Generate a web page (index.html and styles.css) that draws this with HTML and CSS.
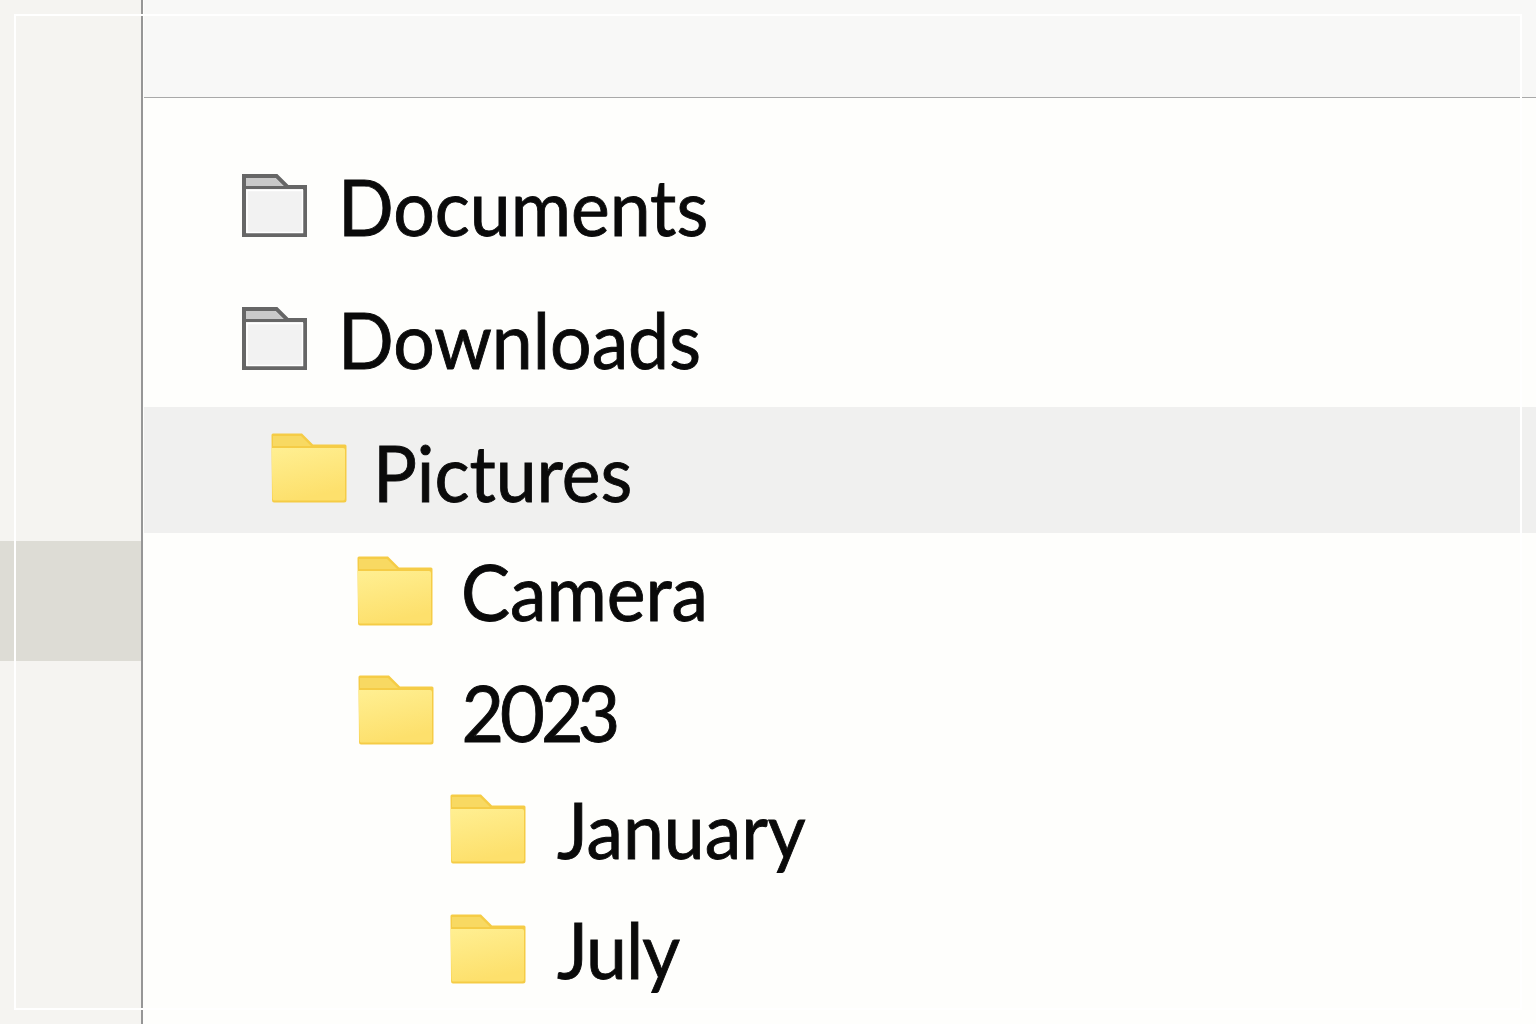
FILE: index.html
```html
<!DOCTYPE html>
<html lang="en">
<head>
    <meta charset="UTF-8">
    <meta name="viewport" content="width=device-width, initial-scale=1.0">
    <title>Folders</title>
    <link rel="stylesheet" href="styles.css">
</head>
<body>
    <svg class="icon-defs" width="0" height="0" aria-hidden="true">
        <defs>
            <linearGradient id="yellow-body" x1="0" y1="0" x2="0.3" y2="1">
                <stop offset="0" stop-color="#ffef92"/>
                <stop offset="1" stop-color="#fde06c"/>
            </linearGradient>
            <symbol id="folder-grey" viewBox="0 0 65 63">
                <path d="M2 2H34.500L45.500 13H63V61H2Z" fill="#f1f1f1" stroke="#666" stroke-width="4"/>
                <path d="M4 4H33.500L41.500 12H4Z" fill="#c9c9c9"/>
                <path d="M3 13.500H62" stroke="#666" stroke-width="3"/>
                <path d="M5 16.500V58.500H60.500V16.500Z" fill="#f2f2f2" stroke="#fff" stroke-width="1.500"/>
            </symbol>
            <symbol id="folder-yellow" viewBox="0 0 76 70">
                <path d="M0.500 2Q0.500 0.500 2 0.500H31L42 11.500H74Q75.500 11.500 75.500 13V67Q75.500 69.500 73 69.500H3Q1 69.500 1 67Z" fill="#f5cc46"/>
                <path d="M2 3H30L40 13H2Z" fill="#f8d962"/>
                <path d="M0.500 15H72Q74 15 74 17V65Q74 67.500 72 67.500H3Q1.500 67.500 1.500 65Z" fill="url(#yellow-body)"/>
            </symbol>
        </defs>
    </svg>

    <div class="window">
        <aside class="sidebar">
            <div class="sidebar-item"></div>
        </aside>
        <main class="content">
            <header class="toolbar"></header>
            <ul class="tree">
                <li class="row row-documents">
                    <svg class="icon icon-grey"><use href="#folder-grey"/></svg>
                    <span>Documents</span>
                </li>
                <li class="row row-downloads">
                    <svg class="icon icon-grey"><use href="#folder-grey"/></svg>
                    <span>Downloads</span>
                </li>
                <li class="row row-pictures selected">
                    <svg class="icon icon-yellow"><use href="#folder-yellow"/></svg>
                    <span>Pictures</span>
                </li>
                <li class="row row-camera">
                    <svg class="icon icon-yellow"><use href="#folder-yellow"/></svg>
                    <span>Camera</span>
                </li>
                <li class="row row-2023">
                    <svg class="icon icon-yellow"><use href="#folder-yellow"/></svg>
                    <span>2023</span>
                </li>
                <li class="row row-january">
                    <svg class="icon icon-yellow"><use href="#folder-yellow"/></svg>
                    <span>January</span>
                </li>
                <li class="row row-july">
                    <svg class="icon icon-yellow"><use href="#folder-yellow"/></svg>
                    <span>July</span>
                </li>
            </ul>
        </main>
    </div>

    <div class="frame"></div>
</body>
</html>
```

FILE: styles.css
```css
* {
    margin: 0;
    padding: 0;
    box-sizing: border-box;
}

html, body {
    height: 100%;
    overflow: hidden;
}

body {
    position: relative;
    background-color: #fefefc;
    color: #0a0a0a;
    font-family: Lato, "Open Sans", sans-serif;
}

.icon-defs {
    position: absolute;
}

.window {
    display: flex;
    height: 100%;
}

.sidebar {
    flex: 0 0 143px;
    padding-top: 541px;
    background-color: #f5f4f1;
    border-right: 2px solid #969696;
}

.sidebar-item {
    height: 120px;
    background-color: #dddcd5;
}

.content {
    flex: 1;
    min-width: 0;
    padding-left: 1px;
}

.toolbar {
    height: 98px;
    background-color: #f8f8f7;
    border-bottom: 1px solid #a9a9a9;
}

.tree {
    list-style: none;
    padding-top: 44px;
}

.row {
    display: flex;
    align-items: center;
    font-size: 78px;
    line-height: 1;
    font-variant-numeric: proportional-nums;
    -webkit-text-stroke: 0.9px #0a0a0a;
}

.row span {
    transform: scaleX(0.94);
    transform-origin: left center;
}

.row-documents { height: 128px; padding-left: 98px; gap: 31px; }
.row-downloads { height: 137px; padding-left: 98px; gap: 31px; }
.row-pictures  { height: 126px; padding-left: 127px; gap: 26px; }
.row-camera    { height: 116px; padding-left: 213px; gap: 28px; }
.row-2023      { height: 122px; padding-left: 214px; gap: 28px; }
.row-january   { height: 116px; padding-left: 306px; gap: 31px; }
.row-july      { height: 124px; padding-left: 306px; gap: 31px; }

.selected {
    background-color: #f0f0ef;
}

.icon {
    flex: none;
}

.icon-grey {
    width: 65px;
    height: 63px;
    margin-top: -1px;
}

.icon-yellow {
    width: 76px;
    height: 70px;
}

.row-pictures .icon-yellow {
    margin-top: -4px;
}

.row-pictures span {
    margin-top: 4px;
}

.row-2023 span {
    margin-top: 4px;
    letter-spacing: -5.500px;
}

.row-july span {
    letter-spacing: -1px;
}

.frame {
    position: absolute;
    left: 14px;
    top: 14px;
    width: 1508px;
    height: 996px;
    border: 2px solid #fff;
    pointer-events: none;
}
```
